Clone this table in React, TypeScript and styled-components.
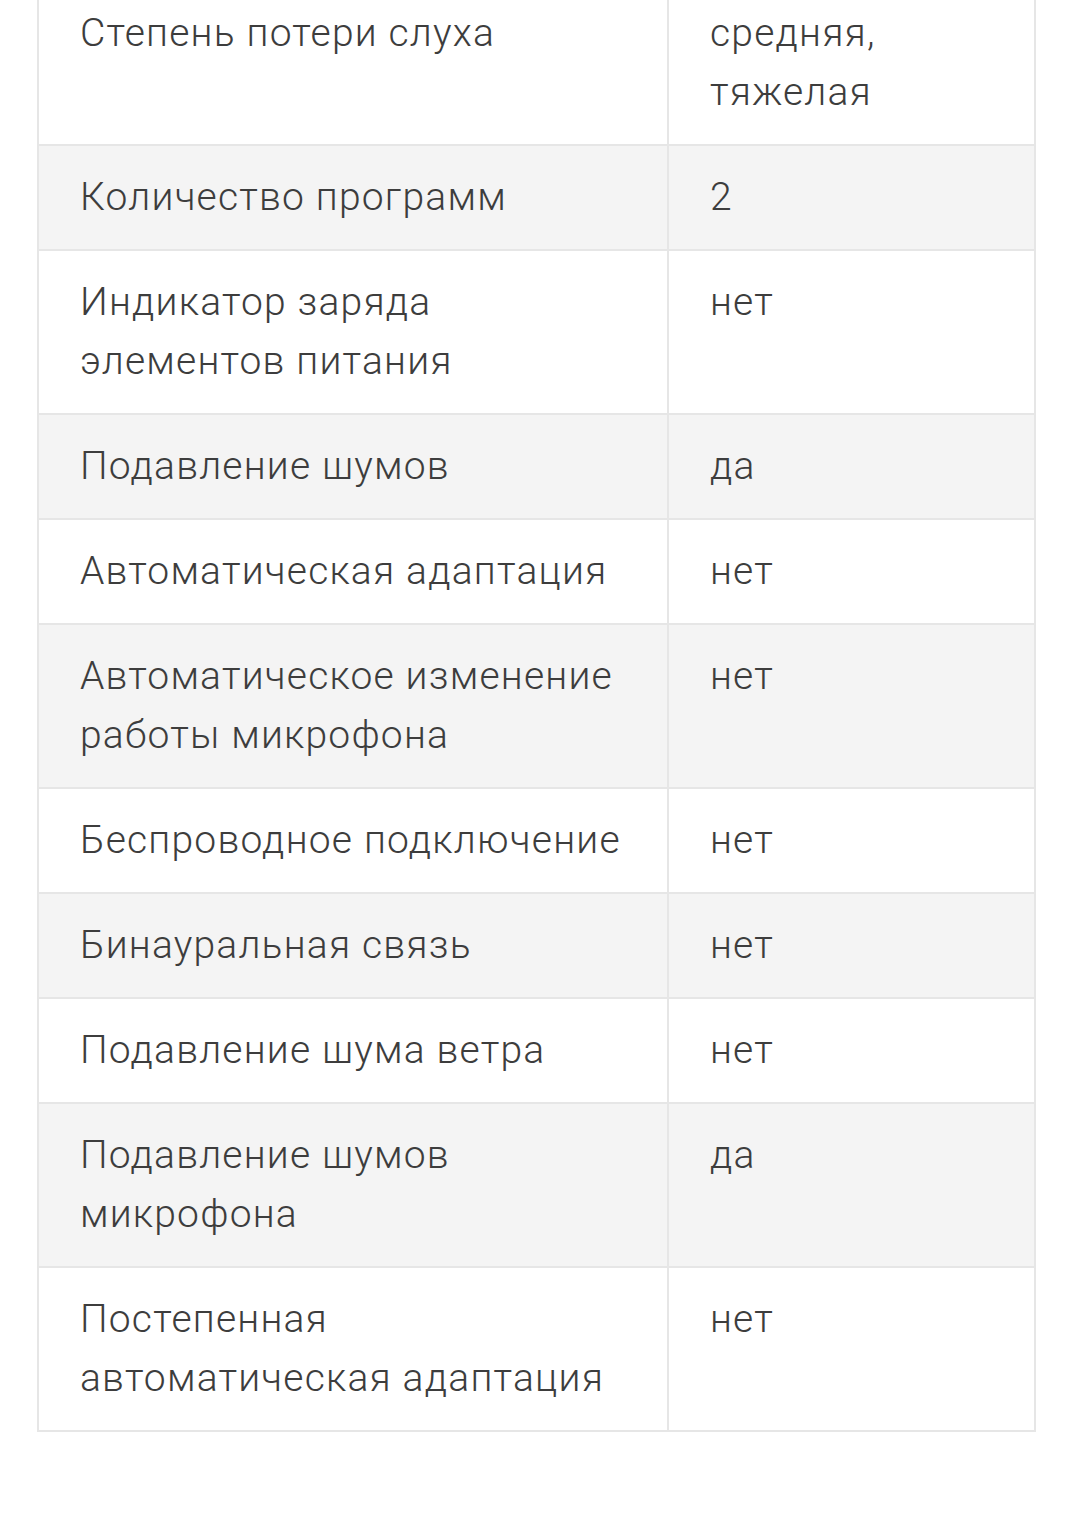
import React from "react";
import styled, { createGlobalStyle } from "styled-components";

interface Spec {
    name: string;
    value: string;
}

const specs: Spec[] = [
    { name: "Степень потери слуха", value: "средняя, тяжелая" },
    { name: "Количество программ", value: "2" },
    { name: "Индикатор заряда элементов питания", value: "нет" },
    { name: "Подавление шумов", value: "да" },
    { name: "Автоматическая адаптация", value: "нет" },
    { name: "Автоматическое изменение работы микрофона", value: "нет" },
    { name: "Беспроводное подключение", value: "нет" },
    { name: "Бинауральная связь", value: "нет" },
    { name: "Подавление шума ветра", value: "нет" },
    { name: "Подавление шумов микрофона", value: "да" },
    { name: "Постепенная автоматическая адаптация", value: "нет" },
];

const App: React.FC = () => {
    return (
        <>
            <GlobalStyle />
            <Page>
                <SpecTable>
                    <colgroup>
                        <NameCol />
                        <col />
                    </colgroup>
                    <tbody>
                        {specs.map((spec, index) => (
                            <Row key={index} $striped={index % 2 === 1}>
                                <NameCell>{spec.name}</NameCell>
                                <ValueCell>{spec.value}</ValueCell>
                            </Row>
                        ))}
                    </tbody>
                </SpecTable>
            </Page>
        </>
    );
};

export default App;

// スタイル定義
const GlobalStyle = createGlobalStyle`
    html, body {
        margin: 0;
        padding: 0;
        background: #ffffff;
    }
    body {
        font-family: Roboto, "Noto Sans", "Liberation Sans", sans-serif;
    }
`;

const Page = styled.div`
    padding: 0 0 0 37px;
    margin-top: -20px;
    height: 1557px;
    overflow: hidden;
`;

const SpecTable = styled.table`
    width: 999px;
    border-collapse: collapse;
    table-layout: fixed;
    border: 2px solid #e6e6e6;
`;

const NameCol = styled.col`
    width: 630px;
`;

const Row = styled.tr<{ $striped: boolean }>`
    background-color: ${(p) => (p.$striped ? "#f4f4f4" : "#ffffff")};
`;

const Cell = styled.td`
    border: 2px solid #e6e6e6;
    padding: 22px 30px 22px 41px;
    vertical-align: top;
    font-size: 39px;
    line-height: 59px;
    font-weight: 300;
    letter-spacing: 1.2px;
    color: #3d3d3d;
    text-align: left;
`;

const NameCell = styled(Cell)``;

const ValueCell = styled(Cell)`
    padding-right: 120px;
`;
